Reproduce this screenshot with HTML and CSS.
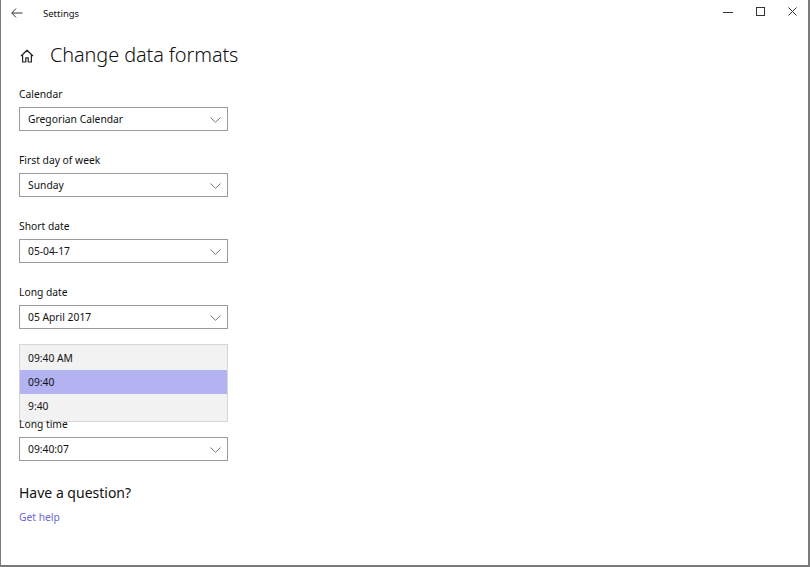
FILE: index.html
```html
<!DOCTYPE html>
<html>
<head>
<meta charset="utf-8">
<link rel="stylesheet" href="styles.css">
</head>
<body>
<div class="window">
  <div class="titlebar">
    <div class="back">
      <svg width="12" height="10" viewBox="0 0 12 10"><path d="M5 0.5 L0.8 5 L5 9.5 M0.8 5 H11.5" fill="none" stroke="#333" stroke-width="1"/></svg>
    </div>
    <div class="apptitle">Settings</div>
    <div class="controls">
      <div class="ctl"><svg width="10" height="10" viewBox="0 0 10 10"><path d="M0 5.5 H10" stroke="#333" stroke-width="1"/></svg></div>
      <div class="ctl"><svg width="9" height="9" viewBox="0 0 9 9"><rect x="0.5" y="0.5" width="8" height="8" fill="none" stroke="#333" stroke-width="1"/></svg></div>
      <div class="ctl"><svg width="9" height="9" viewBox="0 0 9 9"><path d="M0.5 0.5 L8.5 8.5 M8.5 0.5 L0.5 8.5" stroke="#333" stroke-width="1"/></svg></div>
    </div>
  </div>
  <div class="content">
    <div class="header">
      <svg class="home" width="14" height="14" viewBox="0 0 14 14"><path d="M1 7 L7 1.2 L13 7 M2.6 5.6 V13 H5.8 V8.8 H8.2 V13 H11.4 V5.6" fill="none" stroke="#222" stroke-width="1.2" stroke-linejoin="round"/></svg>
      <h1>Change data formats</h1>
    </div>
    <div class="field">
      <div class="label">Calendar</div>
      <div class="select"><span>Gregorian Calendar</span><svg class="chev" width="11" height="6" viewBox="0 0 11 6"><path d="M0.5 0.5 L5.5 5.3 L10.5 0.5" fill="none" stroke="#777" stroke-width="1"/></svg></div>
    </div>
    <div class="field">
      <div class="label">First day of week</div>
      <div class="select"><span>Sunday</span><svg class="chev" width="11" height="6" viewBox="0 0 11 6"><path d="M0.5 0.5 L5.5 5.3 L10.5 0.5" fill="none" stroke="#777" stroke-width="1"/></svg></div>
    </div>
    <div class="field">
      <div class="label">Short date</div>
      <div class="select"><span>05-04-17</span><svg class="chev" width="11" height="6" viewBox="0 0 11 6"><path d="M0.5 0.5 L5.5 5.3 L10.5 0.5" fill="none" stroke="#777" stroke-width="1"/></svg></div>
    </div>
    <div class="field">
      <div class="label">Long date</div>
      <div class="select"><span>05 April 2017</span><svg class="chev" width="11" height="6" viewBox="0 0 11 6"><path d="M0.5 0.5 L5.5 5.3 L10.5 0.5" fill="none" stroke="#777" stroke-width="1"/></svg></div>
    </div>
    <div class="field">
      <div class="label"></div>
      <div class="select"></div>
      <div class="popup">
        <div class="item">09:40 AM</div>
        <div class="item selected">09:40</div>
        <div class="item">9:40</div>
      </div>
    </div>
    <div class="field">
      <div class="label">Long time</div>
      <div class="select"><span>09:40:07</span><svg class="chev" width="11" height="6" viewBox="0 0 11 6"><path d="M0.5 0.5 L5.5 5.3 L10.5 0.5" fill="none" stroke="#777" stroke-width="1"/></svg></div>
    </div>
    <h2>Have a question?</h2>
    <a class="help" href="#">Get help</a>
  </div>
</div>
</body>
</html>
```
FILE: styles.css
```css
* { box-sizing: border-box; }
html, body { margin: 0; padding: 0; background: #fff; }
body { font-family: "Noto Sans", "Open Sans", sans-serif; color: #000; }
.window {
  width: 810px;
  height: 567px;
  border-left: 1px solid #7a7a7a;
  border-right: 2px solid #7a7a7a;
  border-bottom: 2px solid #7a7a7a;
  position: relative;
  overflow: hidden;
}
.titlebar {
  height: 30px;
  display: flex;
  align-items: center;
}
.back {
  width: 32px;
  display: flex;
  justify-content: center;
  margin-top: -5px;
}
.apptitle {
  font-size: 9.5px;
  margin-left: 10px;
  margin-top: -3px;
  color: #111;
}
.controls {
  margin-left: auto;
  display: flex;
  margin-top: -6px;
  margin-right: 0;
}
.ctl {
  width: 32px;
  display: flex;
  justify-content: center;
}
.content {
  padding-left: 18px;
}
.header {
  display: flex;
  align-items: center;
  height: 28px;
  margin-top: 11px;
}
.home { margin-left: 1px; margin-right: 16px; margin-top: 2px; }
h1 {
  margin: 0;
  font-size: 19.9px;
  font-weight: 300;
  line-height: 28px;
  color: #111;
  letter-spacing: -0.1px;
}
.field {
  margin-top: 17px;
  position: relative;
}
.field + .field { margin-top: 21px; }
.label {
  font-size: 10.3px;
  line-height: 16px;
  height: 16px;
  color: #111;
}
.select {
  margin-top: 5px;
  width: 209px;
  height: 24px;
  border: 1.5px solid #9a9a9a;
  display: flex;
  align-items: center;
  padding-left: 8px;
  padding-right: 6px;
  font-size: 10.3px;
  color: #111;
}
.select span { flex: 1; }
.chev { margin-top: 1px; }
.popup {
  position: absolute;
  left: 0;
  top: -6px;
  width: 209px;
  height: 78px;
  background: #f2f2f2;
  border: 1px solid #d6d6d6;
  padding: 1px 0;
}
.item {
  height: 24px;
  line-height: 24px;
  padding-left: 8px;
  font-size: 10.3px;
  color: #111;
}
.item.selected { background: #b3b3f1; }
h2 {
  margin: 22px 0 0 0;
  font-size: 14px;
  font-weight: 400;
  line-height: 20px;
  color: #111;
}
.help {
  display: block;
  margin-top: 6px;
  font-size: 10.3px;
  line-height: 16px;
  color: #6b69d6;
  text-decoration: none;
}
```
